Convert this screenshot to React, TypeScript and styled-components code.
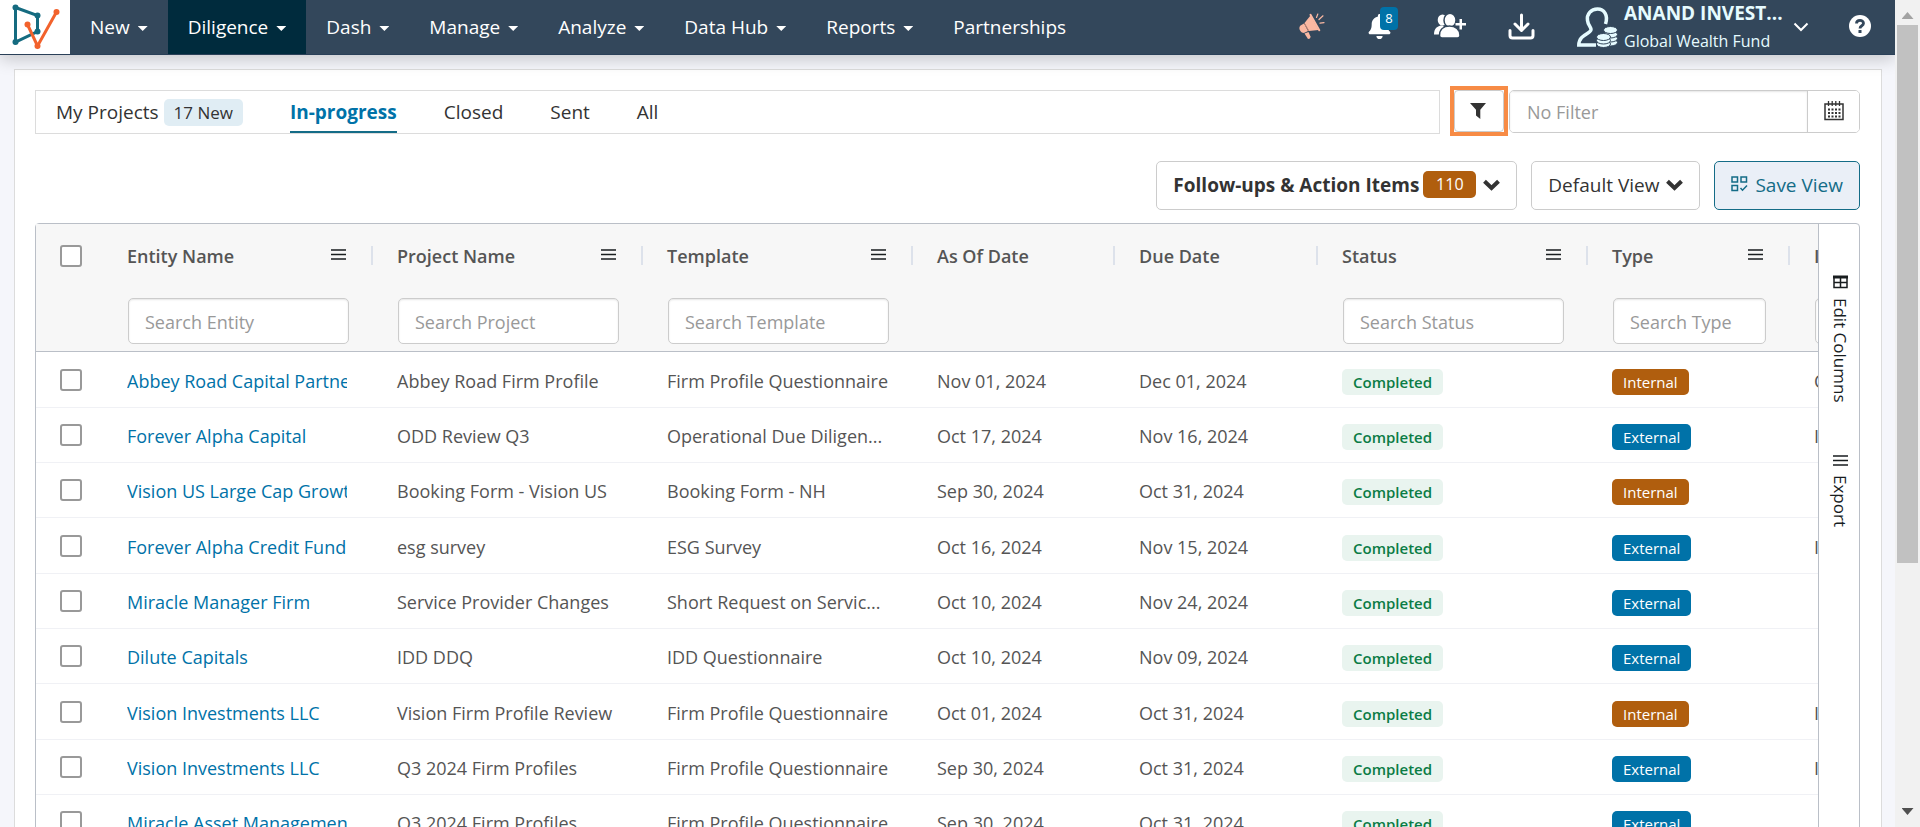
import React from "react";
import styled, { createGlobalStyle, css } from "styled-components";
import { FaBell } from "react-icons/fa";

const GlobalStyle = createGlobalStyle`
  *, *::before, *::after { box-sizing: border-box; }
  body {
    margin: 0;
    overflow: hidden;
    background: #f5f6fb;
    color: #333;
    font-family: "Open Sans", "Noto Sans", sans-serif;
    font-size: 18px;
  }
  button, input { font: inherit; color: inherit; }
  button { cursor: pointer; }
  a { text-decoration: none; }
`;

const Shell = styled.div`
  display: flex;
  height: 100vh;
`;

const Page = styled.div`
  flex: 1;
  min-width: 0;
  overflow: hidden;
`;

/* ---------- top bar ---------- */

const TopBar = styled.header`
  position: relative;
  display: flex;
  align-items: stretch;
  height: 55px;
  background: #33475b;
  border-bottom: 1px solid #2a4058;
  box-shadow: 0 4px 16px rgba(0, 0, 0, 0.2);
`;

const Logo = styled.a`
  display: flex;
  width: 70px;
  background: #fff;
`;

const Nav = styled.nav`
  display: flex;
  flex: 1;
`;

const NavItem = styled.a<{ $active?: boolean }>`
  display: flex;
  align-items: center;
  gap: 8px;
  padding: 0 20px;
  color: #fff;
  font-size: 19px;
  white-space: nowrap;
  background: ${(p) => (p.$active ? "#002b3d" : "transparent")};
`;

const Caret = styled.span`
  width: 10px;
  height: 5px;
  margin-top: 3px;
  background: #fff;
  clip-path: polygon(0 0, 100% 0, 50% 100%);
`;

const Tools = styled.div`
  display: flex;
  align-items: center;
  padding-right: 23px;
  color: #fff;
`;

const IconButton = styled.button`
  position: relative;
  display: flex;
  padding: 0;
  border: 0;
  background: none;
  color: #fff;
  margin-right: 42px;
  margin-bottom: 2px;
`;

const Count = styled.span`
  position: absolute;
  top: -7px;
  left: 13px;
  width: 18px;
  height: 23px;
  border-radius: 4px;
  background: #0072a8;
  font-size: 13px;
  line-height: 22px;
  text-align: center;
`;

const Account = styled.button`
  display: flex;
  align-items: center;
  padding: 0;
  border: 0;
  margin-right: 39px;
  background: none;
  color: #e6fbff;
  text-align: left;
`;

const AccountText = styled.span`
  display: flex;
  flex-direction: column;
  width: 157px;
  margin: 0 12px 0 6px;
  font-size: 16px;
  line-height: 28px;
  white-space: nowrap;
`;

const AccountName = styled.strong`
  font-size: 19px;
  line-height: 27px;
`;

/* ---------- panel ---------- */

const Panel = styled.main`
  min-height: 100vh;
  margin: 14px 13px 0 14px;
  padding: 20px 21px 0 20px;
  border: 1px solid #dcdcdc;
  background: #fff;
`;

const FilterRow = styled.div`
  display: flex;
  align-items: flex-start;
`;

const Tabs = styled.nav`
  display: flex;
  flex: 1;
  gap: 47px;
  height: 44px;
  padding: 0 20px;
  border: 1px solid #dcdcdc;
`;

const Tab = styled.a<{ $active?: boolean }>`
  display: flex;
  align-items: center;
  gap: 5px;
  padding-top: 2px;
  border-bottom: 2px solid transparent;
  color: #333;
  font-size: 19px;
  ${(p) =>
    p.$active &&
    css`
      border-color: #146c87;
      color: #0072a8;
      font-weight: 700;
    `}
`;

const NewBadge = styled.span`
  padding: 0 10px;
  border-radius: 5px;
  background: #e0edf4;
  font-size: 17px;
  line-height: 27px;
`;

const Highlight = styled.div`
  margin: -4px 1px -4px 10px;
  border: 4px solid #f78b45;
`;

const FunnelButton = styled.button`
  display: flex;
  align-items: center;
  justify-content: center;
  width: 50px;
  height: 42px;
  padding: 0 2px 0 0;
  border: 1px solid #ccc;
  border-radius: 4px;
  background: #fff;
  color: #333;
`;

const FilterGroup = styled.div`
  display: flex;
  height: 43px;
  width: 351px;
  border: 1px solid #ccc;
  border-radius: 5px;
  overflow: hidden;
`;

const fieldText = css`
  background: #fff;
  outline: 0;
  &::placeholder {
    color: #999;
    opacity: 1;
  }
`;

const FilterInput = styled.input`
  ${fieldText}
  flex: 1;
  min-width: 0;
  padding: 0 17px;
  border: 0;
  box-shadow: inset 0 1px 2px rgba(0, 0, 0, 0.1);
`;

const CalendarButton = styled.button`
  display: flex;
  align-items: center;
  justify-content: center;
  width: 52px;
  padding: 0 0 2px;
  border: 0;
  border-left: 1px solid #ccc;
  background: #fff;
`;

const ActionRow = styled.div`
  display: flex;
  justify-content: flex-end;
  gap: 14px;
  padding: 27px 0 13px;
`;

const ActionButton = styled.button<{ $primary?: boolean; $strong?: boolean }>`
  display: flex;
  align-items: center;
  gap: ${(p) => (p.$strong ? 4 : 7)}px;
  height: 49px;
  padding: 0 16px 2px;
  border: 1px solid ${(p) => (p.$primary ? "#146c87" : "#ccc")};
  border-radius: 5px;
  background: ${(p) => (p.$primary ? "#eaeff7" : "#fff")};
  color: ${(p) => (p.$primary ? "#146c87" : "#333")};
  font-weight: ${(p) => (p.$strong ? 700 : 400)};
  font-size: 19px;
  white-space: nowrap;
`;

const ActionCount = styled.span`
  width: 53px;
  margin-right: 3px;
  border-radius: 5px;
  background: #b05e0e;
  color: #fff;
  font-size: 16px;
  font-weight: 400;
  line-height: 27px;
  text-align: center;
`;

/* ---------- grid ---------- */

const GridFrame = styled.div`
  display: flex;
  border: 1px solid #babfc7;
  border-radius: 4px 4px 0 0;
`;

const GridViewport = styled.div`
  flex: 1;
  min-width: 0;
  overflow: hidden;
`;

const Table = styled.table`
  width: 1956px;
  table-layout: fixed;
  border-collapse: separate;
  border-spacing: 0;
  color: #555;
  font-size: 18px;
`;

const cell = css`
  padding: 0 24px;
  text-align: left;
  white-space: nowrap;
`;

const HeadCell = styled.th`
  ${cell}
  position: relative;
  height: 63px;
  background: #f7f7f7;
  font-weight: 600;
  &:not(:last-child):not(:first-child)::after {
    content: "";
    position: absolute;
    top: 22px;
    right: 0;
    width: 2px;
    height: 19px;
    background: #dde2eb;
  }
`;

const HeadLabel = styled.div`
  display: flex;
  align-items: center;
  justify-content: space-between;
  padding-right: 3px;
`;

const MenuButton = styled.button`
  display: flex;
  padding: 0 0 3px;
  border: 0;
  background: none;
  color: #181d1f;
`;

const SearchCell = styled.td`
  ${cell}
  padding-left: 25px;
  height: 65px;
  border-bottom: 1px solid #babfc7;
  background: #f7f7f7;
`;

const SearchInput = styled.input`
  ${fieldText}
  display: block;
  width: 100%;
  height: 46px;
  margin-top: 3px;
  padding: 2px 16px 0;
  border: 1px solid #ccc;
  border-radius: 5px;
  box-shadow: inset 0 1px 2px rgba(0, 0, 0, 0.1);
`;

const BodyRow = styled.tr`
  height: 55px;
  &:nth-child(3n + 1) {
    height: 56px;
  }
`;

const BodyCell = styled.td`
  ${cell}
  border-bottom: 1px solid #f0f1f5;
  &:not(:first-child) {
    padding-top: 2px;
  }
`;

const Clip = styled.div`
  overflow: hidden;
  margin-right: 2px;
`;

const EntityLink = styled.a`
  color: #0072a8;
`;

const Check = styled.input`
  appearance: none;
  display: block;
  width: 22px;
  height: 22px;
  margin: 0;
  border: 2px solid #999;
  border-radius: 3px;
  background: #fff;
`;

const pill = css`
  display: inline-block;
  padding: 0 11px;
  margin-top: 2px;
  border-radius: 5px;
  font-size: 15px;
  line-height: 26px;
  vertical-align: middle;
`;

const StatusPill = styled.span`
  ${pill}
  background: #e9f4ef;
  color: #0b7c45;
  font-weight: 600;
`;

const TypePill = styled.span<{ $internal: boolean }>`
  ${pill}
  background: ${(p) => (p.$internal ? "#b05e0e" : "#0072a8")};
  color: #fff;
`;

const SideBar = styled.aside`
  display: flex;
  flex-direction: column;
  width: 41px;
  padding-top: 51px;
  gap: 52px;
  border-left: 1px solid #babfc7;
`;

const SideButton = styled.button`
  display: flex;
  align-items: center;
  gap: 9px;
  width: 40px;
  padding: 0 0 0 2px;
  border: 0;
  background: none;
  color: #181d1f;
  font-size: 17px;
  line-height: 22px;
  writing-mode: vertical-rl;
`;

/* ---------- page scroll bar ---------- */

const ScrollTrack = styled.div`
  display: flex;
  flex-direction: column;
  align-items: center;
  width: 25px;
  padding: 12px 0;
  background: #f1f1f1;
`;

const ScrollArrow = styled.span<{ $down?: boolean }>`
  width: 12px;
  height: 7px;
  background: ${(p) => (p.$down ? "#505050" : "#a3a3a3")};
  clip-path: ${(p) =>
    p.$down ? "polygon(0 0, 100% 0, 50% 100%)" : "polygon(50% 0, 100% 100%, 0 100%)"};
`;

const ScrollThumb = styled.span`
  width: 21px;
  height: 67%;
  margin: 6px 0 auto;
  background: #c1c1c1;
`;

/* ---------- drawings ---------- */

const LogoMark = () => (
  <svg width="70" height="54" viewBox="0 0 70 54" aria-hidden="true">
    <path d="M15.5 7.5 37.5 15.5V31.5L15.5 42Z" stroke="#156b80" strokeWidth="3" fill="none" />
    <g fill="#156b80">
      <circle cx="15.5" cy="7.5" r="3" />
      <circle cx="37.5" cy="15.5" r="3" />
      <circle cx="37.5" cy="31.5" r="3" />
      <circle cx="15.5" cy="42" r="3" />
    </g>
    <path d="M27.5 24.5 37.5 46 56.5 12" stroke="#f2622c" strokeWidth="3" fill="none" />
    <g fill="#f2622c">
      <circle cx="27.5" cy="24.5" r="3" />
      <circle cx="37.5" cy="46" r="3" />
      <circle cx="56.5" cy="12" r="3" />
    </g>
  </svg>
);

const Megaphone = () => (
  <svg width="26" height="26" viewBox="0 0 26 26" aria-hidden="true">
    <g fill="#fbb8a2">
      <path d="M11.5 2.5 19.5 17 10 18 5.5 10Z" />
      <path d="M5 10.5 9 18 5.5 19.8C2 21 -1.5 15 1.5 12.6Z" />
      <path d="M5.5 20.5 9.5 19 11.5 23.5Q11.5 26 9 26Z" />
    </g>
    <path d="M11.5 1.8 20.3 17.2" stroke="#fbb8a2" strokeWidth="2" strokeLinecap="round" />
    <path d="M5.5 10.5 9.8 18" stroke="#c98673" strokeWidth="1" />
    <g stroke="#fbb8a2" strokeWidth="1.2" strokeLinecap="round">
      <path d="M17.5 4.5 18.8 1M20 6.5 24 2.8M21 10.2 25 9.6" />
    </g>
  </svg>
);

const PeoplePlus = () => (
  <svg width="32" height="26" viewBox="0 0 32 26" fill="#fff" aria-hidden="true">
    <ellipse cx="8.5" cy="7" rx="4.8" ry="5.5" />
    <path d="M0 21.5C0 15 4 12.5 8.5 12.5L10 14C7 16 5.5 18.5 5 21.5Z" />
    <g stroke="#33475b" strokeWidth="1.5">
      <ellipse cx="16" cy="7.2" rx="6" ry="7" />
      <path d="M5.5 22.5C5.5 16.5 9.5 13 15.5 13S26 16.5 26 22.5Q26 25 23.5 25H8Q5.5 25 5.5 22.5Z" />
    </g>
    <path d="M25.5 6H28V10H32V12.5H28V16.5H25.5V12.5H21.5V10H25.5Z" />
  </svg>
);

const Download = () => (
  <svg width="27" height="27" viewBox="0 0 27 27" fill="none" stroke="#fff" strokeWidth="3" strokeLinecap="round" strokeLinejoin="round" aria-hidden="true">
    <path d="M13.5 2V16.5M7 11 13.5 17.5 20 11" />
    <path d="M2 17.5V22.5Q2 25 4.5 25H22.5Q25 25 25 22.5V17.5" />
  </svg>
);

const Investor = () => (
  <svg width="41" height="41" viewBox="0 0 41 41" fill="none" stroke="#e6fbff" aria-hidden="true">
    <path
      strokeWidth="3.5"
      d="M28.5 17C31.5 8 27 2 20.5 2S9.5 7 10.5 13.5C11 18 14 20 14 22.5C14 27 2 27 1.8 38H19"
    />
    <g fill="#e6fbff" stroke="#33475b" strokeWidth="1">
      <ellipse cx="33.5" cy="35.5" rx="7" ry="3.5" />
      <ellipse cx="33.5" cy="31.5" rx="7" ry="3.5" />
      <ellipse cx="33.5" cy="27.5" rx="7" ry="3.5" />
      <ellipse cx="33.5" cy="23" rx="7" ry="3.5" />
      <ellipse cx="26.5" cy="37" rx="7" ry="3.5" />
      <ellipse cx="26.5" cy="33.5" rx="7" ry="3.5" />
      <ellipse cx="26.5" cy="30" rx="7" ry="3.5" />
    </g>
  </svg>
);

const ThinChevron = () => (
  <svg width="16" height="10" viewBox="0 0 16 10" fill="none" stroke="#fff" strokeWidth="2" aria-hidden="true">
    <path d="M1.5 1.5 8 8 14.5 1.5" />
  </svg>
);

const BoldChevron = () => (
  <svg width="17" height="13" viewBox="0 0 17 13" fill="none" stroke="#333" strokeWidth="4" aria-hidden="true">
    <path d="M1.5 3.2 8.5 10 15.5 3.2" />
  </svg>
);

const Help = () => (
  <svg width="24" height="24" viewBox="0 0 24 24" aria-hidden="true">
    <circle cx="12" cy="11" r="11" fill="#fff" />
    <path d="M8.5 8.5C8.5 4.5 15.5 4.5 15.5 8.3C15.5 11 12 10.5 12 13.5" fill="none" stroke="#33475b" strokeWidth="2.8" />
    <rect x="10.5" y="15" width="3" height="3" fill="#33475b" />
  </svg>
);

const Funnel = () => (
  <svg width="16" height="16" viewBox="0 0 16 16" fill="#333" aria-hidden="true">
    <path d="M0 0H16L10.3 6.8V16L6 12.5V6.8Z" />
  </svg>
);

const Calendar = () => (
  <svg width="20" height="20" viewBox="0 0 20 20" fill="none" stroke="#333" aria-hidden="true">
    <path d="M1 3H19V18.5H1Z" strokeWidth="1.5" />
    <path d="M4.5 0V5M8.2 0V5M11.8 0V5M15.5 0V5" strokeWidth="1.3" />
    <path d="M4 8.5H16.5M4 12H16.5M4 15.5H16.5" strokeWidth="2" strokeDasharray="2 1.5" />
  </svg>
);

const SaveGrid = () => (
  <svg width="17" height="18" viewBox="0 0 17 18" fill="none" stroke="#146c87" strokeWidth="1.5" aria-hidden="true">
    <path d="M1 1H6.5V6H1ZM10 1H15.5V6H10ZM1 9.5H6.5V14.5H1ZM9.5 12 11.5 14.2 16 9.5" />
  </svg>
);

const Bars = () => (
  <svg width="15" height="11" viewBox="0 0 15 11" stroke="currentColor" strokeWidth="1.5" aria-hidden="true">
    <path d="M0 1H15M0 5.5H15M0 10H15" />
  </svg>
);

const ColumnsIcon = () => (
  <svg width="15" height="14" viewBox="0 0 15 14" fill="none" stroke="currentColor" strokeWidth="1.5" aria-hidden="true">
    <path d="M0 2H15" strokeWidth="3" />
    <path d="M1 1V12.5H14V1M1 7.5H14M7.5 2V12.5" />
  </svg>
);

/* ---------- data ---------- */

const menus = ["New", "Diligence", "Dash", "Manage", "Analyze", "Data Hub", "Reports"];
const tabs = ["In-progress", "Closed", "Sent", "All"];

const columns = [
  { label: "Entity Name", search: "Search Entity", menu: true, width: 270 },
  { label: "Project Name", search: "Search Project", menu: true, width: 270 },
  { label: "Template", search: "Search Template", menu: true, width: 270 },
  { label: "As Of Date", width: 202 },
  { label: "Due Date", width: 203 },
  { label: "Status", search: "Search Status", menu: true, width: 270 },
  { label: "Type", search: "Search Type", menu: true, width: 202 },
  { label: "Initiated By", search: "Search User", width: 202 },
];

type Row = [string, string, string, string, string, boolean, string];

const rows: Row[] = [
  ["Abbey Road Capital Partners", "Abbey Road Firm Profile", "Firm Profile Questionnaire", "Nov 01, 2024", "Dec 01, 2024", true, "Owner"],
  ["Forever Alpha Capital", "ODD Review Q3", "Operational Due Diligen...", "Oct 17, 2024", "Nov 16, 2024", false, "Investor"],
  ["Vision US Large Cap Growth", "Booking Form - Vision US", "Booking Form - NH", "Sep 30, 2024", "Oct 31, 2024", true, ""],
  ["Forever Alpha Credit Fund", "esg survey", "ESG Survey", "Oct 16, 2024", "Nov 15, 2024", false, "Investor"],
  ["Miracle Manager Firm", "Service Provider Changes", "Short Request on Servic...", "Oct 10, 2024", "Nov 24, 2024", false, ""],
  ["Dilute Capitals", "IDD DDQ", "IDD Questionnaire", "Oct 10, 2024", "Nov 09, 2024", false, ""],
  ["Vision Investments LLC", "Vision Firm Profile Review", "Firm Profile Questionnaire", "Oct 01, 2024", "Oct 31, 2024", true, "Investor"],
  ["Vision Investments LLC", "Q3 2024 Firm Profiles", "Firm Profile Questionnaire", "Sep 30, 2024", "Oct 31, 2024", false, "Investor"],
  ["Miracle Asset Management", "Q3 2024 Firm Profiles", "Firm Profile Questionnaire", "Sep 30, 2024", "Oct 31, 2024", false, ""],
];

export default function App() {
  return (
    <Shell>
      <GlobalStyle />
      <Page>
        <TopBar>
          <Logo href="#" aria-label="Home">
            <LogoMark />
          </Logo>
          <Nav>
            {menus.map((m) => (
              <NavItem key={m} href="#" $active={m === "Diligence"}>
                {m}
                <Caret />
              </NavItem>
            ))}
            <NavItem href="#">Partnerships</NavItem>
          </Nav>
          <Tools>
            <IconButton aria-label="Announcements">
              <Megaphone />
            </IconButton>
            <IconButton aria-label="Notifications">
              <FaBell size={25} />
              <Count>8</Count>
            </IconButton>
            <IconButton aria-label="Invite people">
              <PeoplePlus />
            </IconButton>
            <IconButton aria-label="Downloads">
              <Download />
            </IconButton>
            <Account>
              <Investor />
              <AccountText>
                <AccountName>ANAND INVEST...</AccountName>
                Global Wealth Fund
              </AccountText>
              <ThinChevron />
            </Account>
            <Help />
          </Tools>
        </TopBar>

        <Panel>
          <FilterRow>
            <Tabs>
              <Tab href="#">
                My Projects <NewBadge>17 New</NewBadge>
              </Tab>
              {tabs.map((t) => (
                <Tab key={t} href="#" $active={t === "In-progress"}>
                  {t}
                </Tab>
              ))}
            </Tabs>
            <Highlight>
              <FunnelButton aria-label="Filter">
                <Funnel />
              </FunnelButton>
            </Highlight>
            <FilterGroup>
              <FilterInput aria-label="Filter" placeholder="No Filter" />
              <CalendarButton aria-label="Pick dates">
                <Calendar />
              </CalendarButton>
            </FilterGroup>
          </FilterRow>

          <ActionRow>
            <ActionButton $strong>
              Follow-ups &amp; Action Items
              <ActionCount>110</ActionCount>
              <BoldChevron />
            </ActionButton>
            <ActionButton>
              Default View
              <BoldChevron />
            </ActionButton>
            <ActionButton $primary>
              <SaveGrid />
              Save View
            </ActionButton>
          </ActionRow>

          <GridFrame>
            <GridViewport>
              <Table>
                <colgroup>
                  <col width={67} />
                  {columns.map((c) => (
                    <col key={c.label} width={c.width} />
                  ))}
                </colgroup>
                <thead>
                  <tr>
                    <HeadCell>
                      <Check type="checkbox" aria-label="Select all" />
                    </HeadCell>
                    {columns.map((c) => (
                      <HeadCell key={c.label} scope="col">
                        <HeadLabel>
                          {c.label}
                          {c.menu && (
                            <MenuButton aria-label={`${c.label} menu`}>
                              <Bars />
                            </MenuButton>
                          )}
                        </HeadLabel>
                      </HeadCell>
                    ))}
                  </tr>
                  <tr>
                    <SearchCell />
                    {columns.map((c) => (
                      <SearchCell key={c.label}>
                        {c.search && <SearchInput aria-label={c.search} placeholder={c.search} />}
                      </SearchCell>
                    ))}
                  </tr>
                </thead>
                <tbody>
                  {rows.map(([entity, project, template, asOf, due, internal, by], i) => (
                    <BodyRow key={i}>
                      <BodyCell>
                        <Check type="checkbox" aria-label={`Select ${entity}`} />
                      </BodyCell>
                      <BodyCell>
                        <Clip>
                          <EntityLink href="#">{entity}</EntityLink>
                        </Clip>
                      </BodyCell>
                      <BodyCell>{project}</BodyCell>
                      <BodyCell>{template}</BodyCell>
                      <BodyCell>{asOf}</BodyCell>
                      <BodyCell>{due}</BodyCell>
                      <BodyCell>
                        <StatusPill>Completed</StatusPill>
                      </BodyCell>
                      <BodyCell>
                        <TypePill $internal={internal}>{internal ? "Internal" : "External"}</TypePill>
                      </BodyCell>
                      <BodyCell>{by}</BodyCell>
                    </BodyRow>
                  ))}
                </tbody>
              </Table>
            </GridViewport>
            <SideBar>
              <SideButton>
                <ColumnsIcon />
                Edit Columns
              </SideButton>
              <SideButton>
                <Bars />
                Export
              </SideButton>
            </SideBar>
          </GridFrame>
        </Panel>
      </Page>
      <ScrollTrack aria-hidden="true">
        <ScrollArrow />
        <ScrollThumb />
        <ScrollArrow $down />
      </ScrollTrack>
    </Shell>
  );
}
